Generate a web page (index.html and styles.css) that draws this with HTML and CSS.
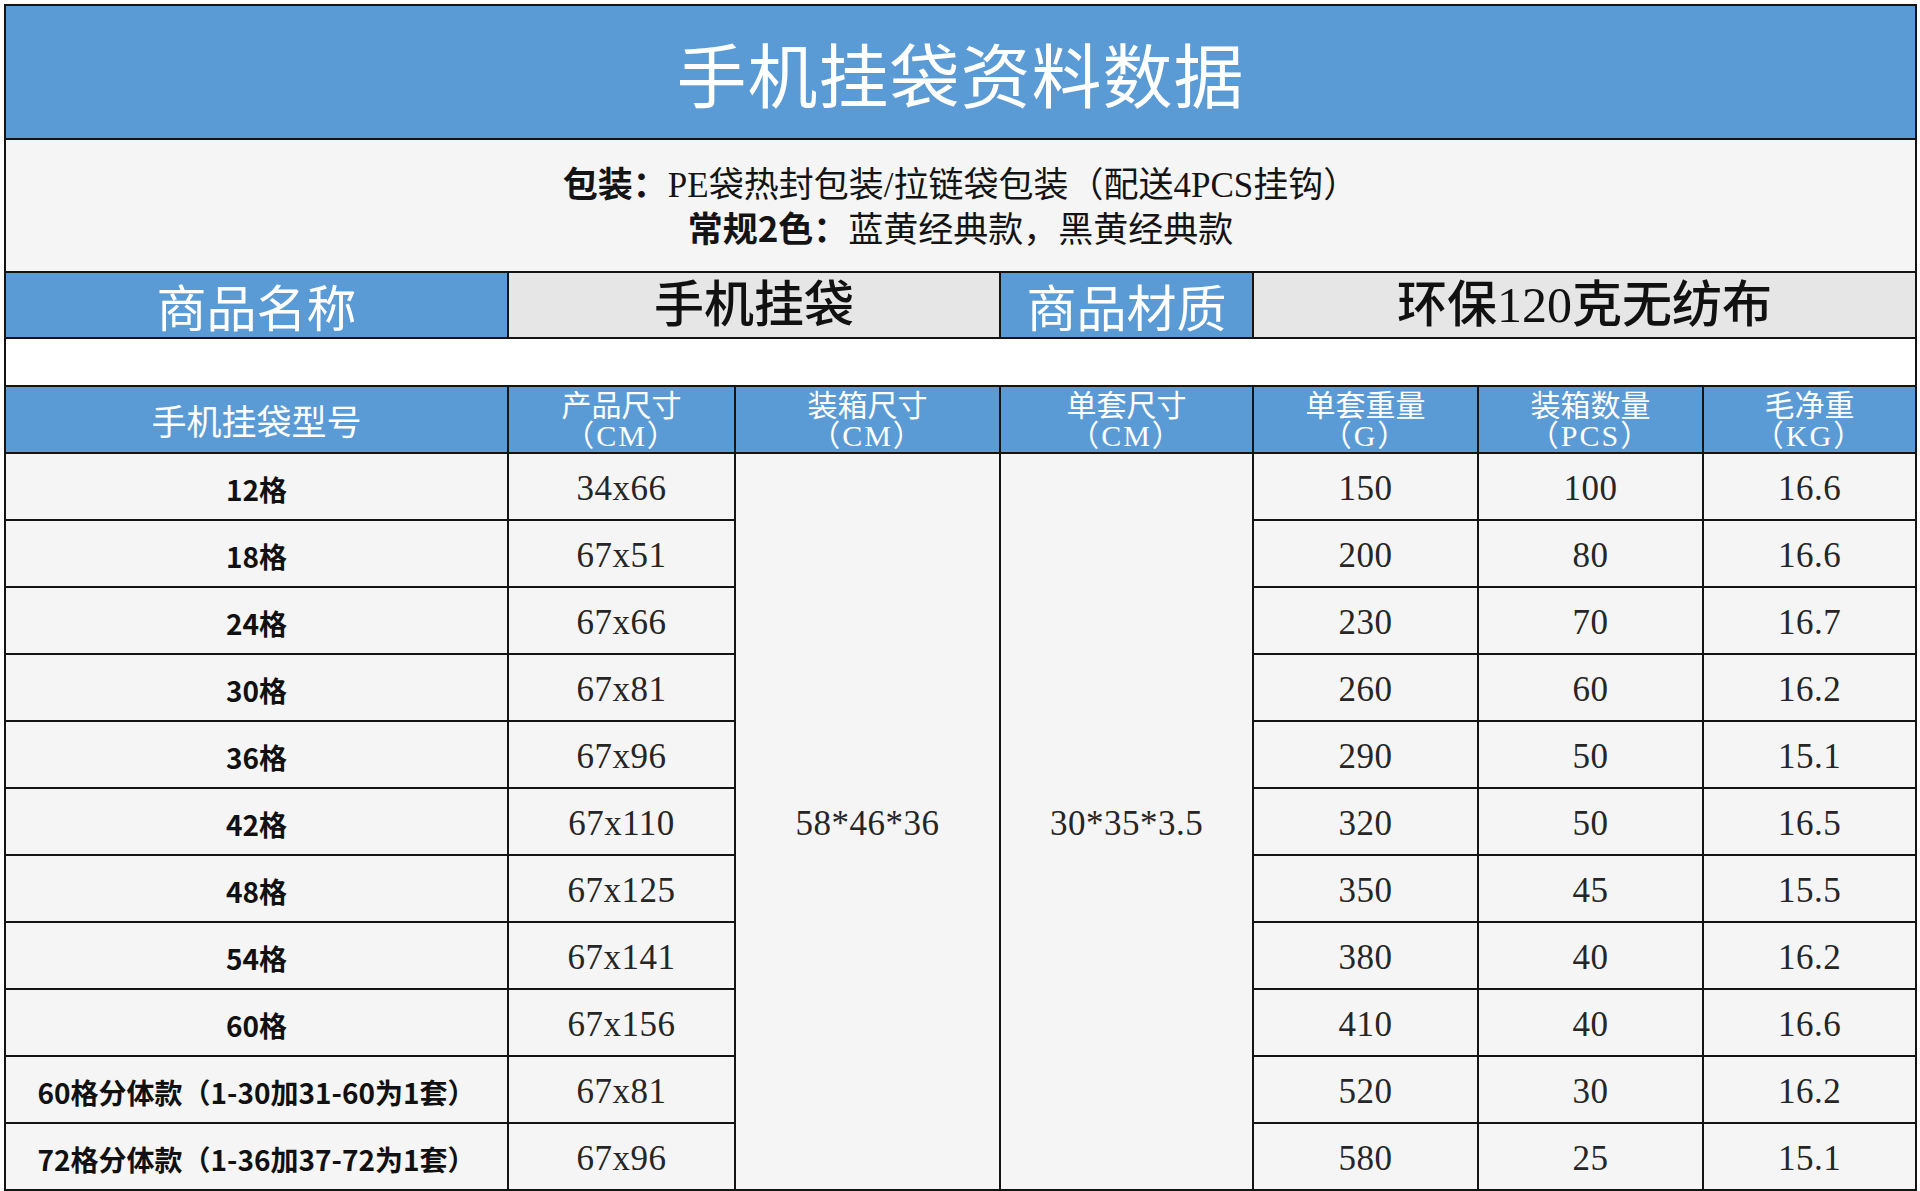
FILE: index.html
```html
<!DOCTYPE html>
<html lang="zh-CN">
<head>
<meta charset="utf-8">
<title>手机挂袋资料数据</title>
<link rel="stylesheet" href="styles.css">
</head>
<body>
<div class="sheet">
<table class="spec">
  <colgroup>
    <col class="c1"><col class="c2"><col class="c3"><col class="c4"><col class="c5"><col class="c6"><col class="c7">
  </colgroup>
  <tr class="r-title"><td colspan="7" class="title">手机挂袋资料数据</td></tr>
  <tr class="r-info">
    <td colspan="7" class="info">
      <p><b>包装：</b>PE袋热封包装/拉链袋包装（配送4PCS挂钩）</p>
      <p><b>常规2色：</b>蓝黄经典款，黑黄经典款</p>
    </td>
  </tr>
  <tr class="r-name">
    <td class="label">商品名称</td>
    <td colspan="2" class="value">手机挂袋</td>
    <td class="label">商品材质</td>
    <td colspan="3" class="value">环保120克无纺布</td>
  </tr>
  <tr class="r-blank"><td colspan="7" class="blank"></td></tr>
  <tr class="r-head">
    <th class="head-one">手机挂袋型号</th>
    <th><div class="head-two"><span class="cap">产品尺寸</span><span class="unit">（CM）</span></div></th>
    <th><div class="head-two"><span class="cap">装箱尺寸</span><span class="unit">（CM）</span></div></th>
    <th><div class="head-two"><span class="cap">单套尺寸</span><span class="unit">（CM）</span></div></th>
    <th><div class="head-two"><span class="cap">单套重量</span><span class="unit">（G）</span></div></th>
    <th><div class="head-two"><span class="cap">装箱数量</span><span class="unit">（PCS）</span></div></th>
    <th><div class="head-two"><span class="cap">毛净重</span><span class="unit">（KG）</span></div></th>
  </tr>
  <tr class="r-data"><td class="model">12格</td><td class="num">34x66</td><td class="num merged" rowspan="11">58*46*36</td><td class="num merged" rowspan="11">30*35*3.5</td><td class="num">150</td><td class="num">100</td><td class="num">16.6</td></tr>
  <tr class="r-data"><td class="model">18格</td><td class="num">67x51</td><td class="num">200</td><td class="num">80</td><td class="num">16.6</td></tr>
  <tr class="r-data"><td class="model">24格</td><td class="num">67x66</td><td class="num">230</td><td class="num">70</td><td class="num">16.7</td></tr>
  <tr class="r-data"><td class="model">30格</td><td class="num">67x81</td><td class="num">260</td><td class="num">60</td><td class="num">16.2</td></tr>
  <tr class="r-data"><td class="model">36格</td><td class="num">67x96</td><td class="num">290</td><td class="num">50</td><td class="num">15.1</td></tr>
  <tr class="r-data"><td class="model">42格</td><td class="num">67x110</td><td class="num">320</td><td class="num">50</td><td class="num">16.5</td></tr>
  <tr class="r-data"><td class="model">48格</td><td class="num">67x125</td><td class="num">350</td><td class="num">45</td><td class="num">15.5</td></tr>
  <tr class="r-data"><td class="model">54格</td><td class="num">67x141</td><td class="num">380</td><td class="num">40</td><td class="num">16.2</td></tr>
  <tr class="r-data"><td class="model">60格</td><td class="num">67x156</td><td class="num">410</td><td class="num">40</td><td class="num">16.6</td></tr>
  <tr class="r-data"><td class="model">60格分体款（1-30加31-60为1套）</td><td class="num">67x81</td><td class="num">520</td><td class="num">30</td><td class="num">16.2</td></tr>
  <tr class="r-data"><td class="model">72格分体款（1-36加37-72为1套）</td><td class="num">67x96</td><td class="num">580</td><td class="num">25</td><td class="num">15.1</td></tr>
</table>
</div>
</body>
</html>
```

FILE: styles.css
```css
html, body {
  margin: 0;
  padding: 0;
  background: #ffffff;
}

.sheet {
  padding: 4px 0 0 4px;
}

.spec {
  width: 1913px;
  border-collapse: collapse;
  table-layout: fixed;
  font-family: "Noto Sans CJK SC", sans-serif;
  color: #1c1c1c;
}

.spec td,
.spec th {
  border: 2px solid #141414;
  padding: 0;
  text-align: center;
  vertical-align: middle;
  white-space: nowrap;
}

.c1 { width: 503px; }
.c2 { width: 227px; }
.c3 { width: 265px; }
.c4 { width: 253px; }
.c5 { width: 225px; }
.c6 { width: 225px; }
.c7 { width: 213px; }

.r-title { height: 134px; }
.r-info { height: 133px; }
.r-name { height: 66px; }
.r-blank { height: 48px; }
.r-head { height: 67px; }
.r-data { height: 67px; }

.title {
  background: #5b9bd5;
  color: #ffffff;
  font-size: 70px;
  font-weight: 400;
  letter-spacing: 1px;
}

.info {
  background: #f5f5f5;
  font-family: "Liberation Serif", "Noto Sans CJK SC", serif;
  font-size: 35px;
  color: #141414;
}

.info p {
  margin: 0;
  line-height: 41px;
}

.info b {
  font-family: "Noto Sans CJK SC", sans-serif;
  font-weight: 700;
}

.label {
  background: #5b9bd5;
  color: #ffffff;
  font-size: 50px;
  font-weight: 400;
  line-height: 60px;
}

.value {
  background: #e7e6e6;
  color: #111111;
  font-family: "Liberation Serif", "Noto Sans CJK SC", serif;
  font-size: 50px;
  font-weight: 500;
  line-height: 60px;
}

.blank {
  background: #ffffff;
}

.r-head th {
  background: #5b9bd5;
  color: #ffffff;
  font-weight: 400;
}

.head-one {
  font-size: 35px;
  padding-top: 6px;
}

.head-two {
  display: flex;
  flex-direction: column;
  align-items: center;
  height: 65px;
  font-size: 30px;
  line-height: 32.5px;
}

.unit {
  font-family: "Liberation Serif", "Noto Sans CJK SC", serif;
  letter-spacing: 2px;
}

.r-data td {
  background: #f5f5f5;
  padding-top: 4px;
}

.model {
  font-size: 28px;
  font-weight: 700;
  color: #111111;
}

.num {
  font-family: "Liberation Serif", "Noto Sans CJK SC", serif;
  font-size: 35px;
  letter-spacing: 0.5px;
  color: #262626;
}
```
